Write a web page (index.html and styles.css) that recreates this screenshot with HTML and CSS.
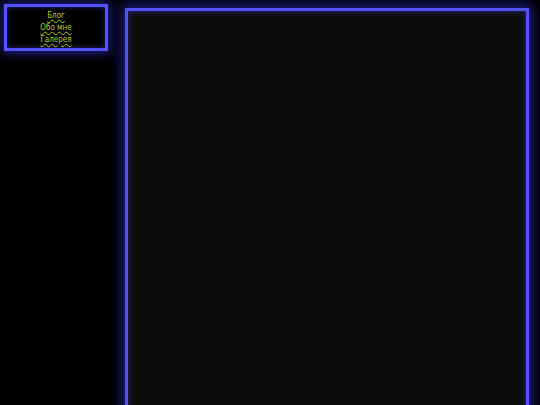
FILE: index.html
```html
<!DOCTYPE html>
<html lang="ru">
<head>
<meta charset="utf-8">
<title>Сайт</title>
<link rel="stylesheet" href="styles.css">
</head>
<body>
<div class="page">
  <nav class="nav">
    <a href="#" class="nav-link">Блог</a>
    <a href="#" class="nav-link">Обо мне</a>
    <a href="#" class="nav-link">Галерея</a>
  </nav>
  <main class="main"></main>
</div>
</body>
</html>
```
FILE: styles.css
```css
html, body {
  margin: 0;
  padding: 0;
  background: #000;
  height: 100%;
  overflow: hidden;
}
.page {
  display: flex;
  align-items: flex-start;
  padding: 4px 0 0 4px;
}
.nav {
  box-sizing: border-box;
  width: 104px;
  height: 47px;
  background: #000;
  border: 3px solid #5454ff;
  box-shadow: 0 0 10px 2px rgba(60, 60, 255, 0.55), inset 0 0 5px rgba(80, 80, 255, 0.5);
  display: flex;
  flex-direction: column;
  align-items: center;
  justify-content: center;
  font-family: "DejaVu Sans Condensed", "DejaVu Sans", sans-serif;
  font-size: 8px;
  line-height: 12px;
}
.nav-link {
  color: #a8d422;
  text-decoration: underline wavy #a8d422;
  text-decoration-thickness: 1px;
  text-underline-offset: 1px;
}
.main {
  box-sizing: border-box;
  margin: 4px 0 0 17px;
  width: 404px;
  height: 440px;
  background: #0d0d0d;
  border: 3px solid #5454ff;
  box-shadow: 0 0 12px 3px rgba(60, 60, 255, 0.55), inset 0 0 6px rgba(80, 80, 255, 0.45);
}
```
